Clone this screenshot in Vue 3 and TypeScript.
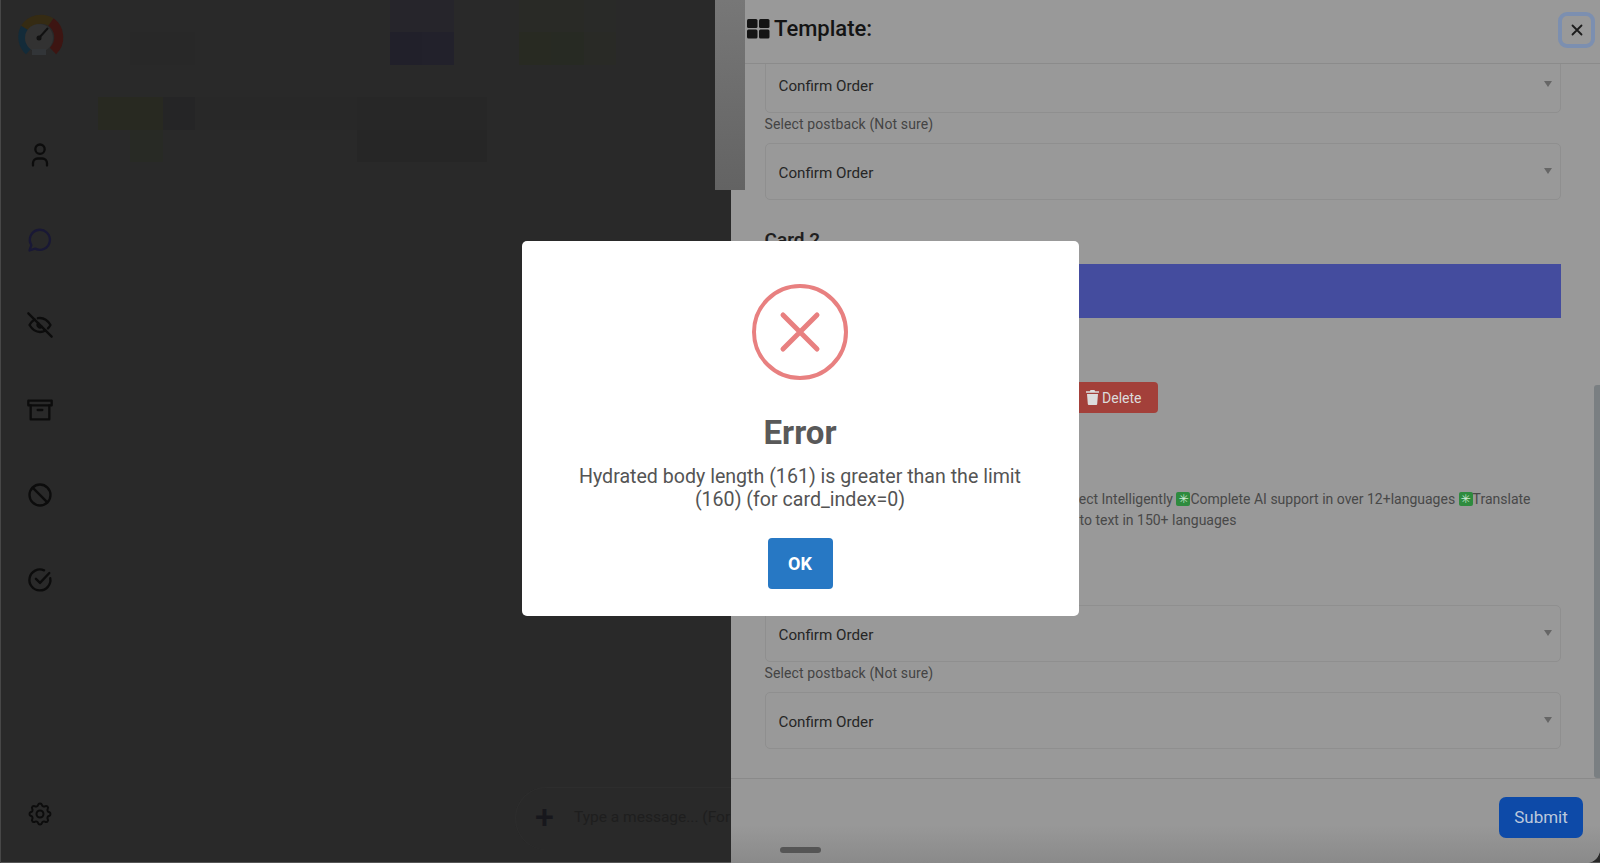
<script setup lang="ts">
import { computed } from 'vue'

interface NavIcon {
  name: string
  paths: string[]
  active?: boolean
}

const navIcons: NavIcon[] = [
  { name: 'user', paths: ['M8 7a4 4 0 1 0 8 0a4 4 0 0 0 -8 0', 'M6 21v-2a4 4 0 0 1 4 -4h4a4 4 0 0 1 4 4v2'] },
  { name: 'chat', active: true, paths: ['M3 21l1.6 -4.6a8.6 8.6 0 1 1 3.2 3l-4.8 1.6'] },
  {
    name: 'hidden',
    paths: [
      'M10.585 10.587a2 2 0 0 0 2.829 2.828',
      'M16.681 16.673a8.717 8.717 0 0 1 -4.681 1.327c-3.6 0 -6.6 -2 -9 -6c1.272 -2.12 2.712 -3.678 4.32 -4.674m2.86 -1.146a9.055 9.055 0 0 1 1.82 -.18c3.6 0 6.6 2 9 6c-.666 1.11 -1.379 2.067 -2.138 2.87',
      'M2 2l20 20',
    ],
  },
  { name: 'archive', paths: ['M2 4h20v4H2z', 'M4 8v12h16V8', 'M10 12h4'] },
  { name: 'blocked', paths: ['M3 12a9 9 0 1 0 18 0a9 9 0 0 0 -18 0', 'M5.7 5.7l12.6 12.6'] },
  { name: 'done', paths: ['M20.8 10.5A9 9 0 1 1 15.5 3.7', 'M20 6l-8 8.5-3.5-3.5'] },
]

const gearPaths = [
  'M10.325 4.317c.426 -1.756 2.924 -1.756 3.35 0a1.724 1.724 0 0 0 2.573 1.066c1.543 -.94 3.31 .826 2.37 2.37a1.724 1.724 0 0 0 1.065 2.572c1.756 .426 1.756 2.924 0 3.35a1.724 1.724 0 0 0 -1.066 2.573c.94 1.543 -.826 3.31 -2.37 2.37a1.724 1.724 0 0 0 -2.572 1.065c-.426 1.756 -2.924 1.756 -3.35 0a1.724 1.724 0 0 0 -2.573 -1.066c-1.543 .94 -3.31 -.826 -2.37 -2.37a1.724 1.724 0 0 0 -1.065 -2.572c-1.756 -.426 -1.756 -2.924 0 -3.35a1.724 1.724 0 0 0 1.066 -2.573c-.94 -1.543 .826 -3.31 2.37 -2.37c1 .608 2.296 .07 2.572 -1.065z',
  'M9 12a3 3 0 1 0 6 0a3 3 0 0 0 -6 0',
]

// blurred message thumbnails behind the dialog: row,col -> colour
const tinted: Record<string, string> = {
  '0,9': '#26252b',
  '0,10': '#26252b',
  '0,13': '#292a26',
  '0,14': '#292a26',
  '0,15': '#292a28',
  '1,1': '#282828',
  '1,2': '#282828',
  '1,9': '#21202a',
  '1,10': '#22212b',
  '1,13': '#282a22',
  '1,14': '#272a23',
  '1,15': '#292a26',
  '3,0': '#282921',
  '3,1': '#282921',
  '3,2': '#252526',
  '3,3': '#282828',
  '3,4': '#282828',
  '3,5': '#282828',
  '3,6': '#282828',
  '3,7': '#282828',
  '3,8': '#272727',
  '3,9': '#272727',
  '3,10': '#272727',
  '3,11': '#272727',
  '4,1': '#282a25',
  '4,8': '#262626',
  '4,9': '#262626',
  '4,10': '#262626',
  '4,11': '#262626',
}

const blurCells = computed(() => {
  const cells: { key: string; color: string }[] = []
  for (let r = 0; r < 6; r++) {
    for (let c = 0; c < 18; c++) {
      const key = r + ',' + c
      cells.push({ key, color: tinted[key] || 'transparent' })
    }
  }
  return cells
})
</script>

<template>
  <div class="app">
    <aside class="sidebar">
      <div class="logo">
        <svg width="50" height="54" viewBox="0 0 50 54" fill="none">
          <path d="M13 41A19 19 0 0 1 9 18" stroke="#132b39" stroke-width="9" />
          <path d="M9 18A19 19 0 0 1 35 12" stroke="#352b13" stroke-width="9" />
          <path d="M35 12A19 19 0 0 1 37 41" stroke="#3d1512" stroke-width="9" />
          <circle cx="23" cy="28" r="14" fill="#323232" />
          <path d="M23 28L32 18" stroke="#111" stroke-width="2" />
          <circle cx="23" cy="28" r="2.5" fill="#111" />
          <path d="M16 42h14" stroke="#323538" stroke-width="6" />
        </svg>
      </div>
      <nav class="nav">
        <div v-for="icon in navIcons" :key="icon.name" class="nav-item" :class="{ active: icon.active }">
          <svg width="28" height="28" viewBox="0 0 24 24" fill="none" stroke="currentColor" stroke-width="2" stroke-linecap="round" stroke-linejoin="round">
            <path v-for="d in icon.paths" :key="d" :d="d" />
          </svg>
        </div>
      </nav>
      <div class="nav-item gear">
        <svg width="28" height="28" viewBox="0 0 24 24" fill="none" stroke="currentColor" stroke-width="1.7" stroke-linecap="round" stroke-linejoin="round">
          <path v-for="d in gearPaths" :key="d" :d="d" />
        </svg>
      </div>
    </aside>

    <main class="chat">
      <div class="blur-grid">
        <div v-for="cell in blurCells" :key="cell.key" :style="{ background: cell.color }" />
      </div>
      <div class="composer">
        <span class="plus">+</span>
        <span class="placeholder">Type a message... (For new line press Shift + Enter)</span>
      </div>
    </main>

    <section class="panel">
      <header class="panel-head">
        <div class="panel-title">
          <svg width="23" height="20" viewBox="0 0 23 20" fill="#141414">
            <rect x="0" y="0" width="10.5" height="9" rx="1.5" />
            <rect x="12" y="0" width="10.5" height="9" rx="1.5" />
            <rect x="0" y="10.5" width="10.5" height="9" rx="1.5" />
            <rect x="12" y="10.5" width="10.5" height="9" rx="1.5" />
          </svg>
          <span>Template:</span>
        </div>
        <button class="close">
          <svg width="12" height="12" viewBox="0 0 12 12" stroke="#1c1c1c" stroke-width="1.8" stroke-linecap="round">
            <path d="M1.5 1.5l9 9M10.5 1.500l-9 9" />
          </svg>
        </button>
      </header>

      <div class="panel-body">
        <div class="select first"><span>Confirm Order</span><i class="caret" /></div>
        <label class="field-label">Select postback (Not sure)</label>
        <div class="select"><span>Confirm Order</span><i class="caret" /></div>

        <h3 class="card-title">Card 2</h3>
        <div class="media-bar" />

        <div class="card-actions">
          <button class="delete">
            <svg width="13" height="15" viewBox="0 0 13 15" fill="#dcdcdc">
              <path d="M4.5 0h4l.6 1.2H13v1.6H0V1.2h3.9zM1 4h11l-.8 10a1 1 0 0 1-1 1H2.800a1 1 0 0 1-1-1z" />
            </svg>
            Delete
          </button>
        </div>

        <div class="card-text">
          <div class="line-end">
            Connect Intelligently <span class="spark">✳</span>Complete AI support in over 12+languages <span class="spark">✳</span>Translate
          </div>
          <div class="line-start">to text in 150+ languages</div>
        </div>

        <div class="select lower"><span>Confirm Order</span><i class="caret" /></div>
        <label class="field-label">Select postback (Not sure)</label>
        <div class="select"><span>Confirm Order</span><i class="caret" /></div>
      </div>

      <footer class="panel-foot">
        <button class="submit">Submit</button>
      </footer>
      <div class="panel-scroll" />
    </section>

    <div class="scroll-thumb" />
    <div class="home-handle" />

    <div class="overlay">
      <div class="modal" role="dialog">
        <div class="error-icon">
          <svg width="96" height="96" viewBox="0 0 96 96" fill="none" stroke="#e88080" stroke-linecap="round">
            <circle cx="48" cy="48" r="46" stroke-width="4" />
            <path d="M31 31l34 34M65 31L31 65" stroke-width="5" />
          </svg>
        </div>
        <h2 class="modal-title">Error</h2>
        <p class="modal-text">Hydrated body length (161) is greater than the limit (160) (for card_index=0)</p>
        <button class="ok">OK</button>
      </div>
    </div>
  </div>
</template>

<style scoped>
.app {
  position: relative;
  display: flex;
  width: 1600px;
  height: 863px;
  overflow: hidden;
  background: #292929;
  font-family: Roboto, "Liberation Sans", sans-serif;
  box-shadow: inset 1px 0 0 #474747, inset 0 -1px 0 #565656;
}

.sidebar {
  width: 80px;
  flex-shrink: 0;
  display: flex;
  flex-direction: column;
  align-items: center;
}

.logo {
  height: 112px;
  padding-top: 10px;
  box-sizing: border-box;
  align-self: flex-start;
  padding-left: 16px;
}

.nav {
  display: flex;
  flex-direction: column;
}

.nav-item {
  height: 85px;
  display: flex;
  align-items: center;
  justify-content: center;
  color: #0c0c0c;
}

.nav-item.active {
  color: #191835;
}

.gear {
  margin-top: auto;
  margin-bottom: 7px;
}

.chat {
  flex: 1;
  min-width: 0;
  display: flex;
  flex-direction: column;
  justify-content: space-between;
  padding-left: 18px;
}

.blur-grid {
  display: grid;
  grid-template-columns: repeat(18, 32.4px);
  grid-auto-rows: 32.4px;
}

.composer {
  align-self: flex-end;
  width: 216px;
  height: 63px;
  margin-bottom: 13px;
  box-sizing: border-box;
  display: flex;
  align-items: center;
  overflow: hidden;
  border-radius: 32px 0 0 32px;
  box-shadow: inset 1px 0 0 #2d2d2d, inset 0 1px 0 #2d2d2d;
  color: #181818;
  white-space: nowrap;
}

.plus {
  width: 59px;
  flex-shrink: 0;
  padding: 0 0 6px 20px;
  box-sizing: border-box;
  font-size: 34px;
  font-weight: 500;
  line-height: 1;
  color: #17171c;
}

.placeholder {
  padding-bottom: 3px;
  font-size: 15.5px;
  color: #1e1e1e;
}

.panel {
  position: relative;
  width: 869px;
  flex-shrink: 0;
  display: flex;
  flex-direction: column;
  background: #999999;
  border-bottom-right-radius: 14px;
  overflow: hidden;
}

.panel-head {
  height: 64px;
  flex-shrink: 0;
  box-sizing: border-box;
  display: flex;
  align-items: center;
  justify-content: space-between;
  padding: 0 5px 6px 16px;
  border-bottom: 1px solid #8b8b8b;
}

.panel-title {
  display: flex;
  align-items: center;
  gap: 4px;
  font-size: 22px;
  font-weight: 500;
  color: #141414;
}

.close {
  width: 37px;
  height: 36px;
  margin-top: 3px;
  padding: 0;
  display: flex;
  align-items: center;
  justify-content: center;
  background: #999999;
  border: 4px solid #7c8fb0;
  border-radius: 9px;
}

.panel-body {
  flex: 1;
  min-height: 0;
  overflow: hidden;
  padding: 0 39px 0 33.5px;
}

.select {
  position: relative;
  height: 57px;
  box-sizing: border-box;
  display: flex;
  align-items: center;
  padding: 2px 14px 0 13px;
  border: 1px solid #8f8f8f;
  border-radius: 5px;
  font-size: 15.2px;
  color: #262626;
}

.select.first {
  margin-top: -8px;
}

.select.lower {
  margin-top: 74px;
}

.caret {
  position: absolute;
  right: 8px;
  top: 24px;
  border-left: 4px solid transparent;
  border-right: 4px solid transparent;
  border-top: 6px solid #666666;
}

.field-label {
  display: block;
  height: 30px;
  padding-top: 2px;
  box-sizing: border-box;
  font-size: 14px;
  line-height: 18px;
  letter-spacing: 0.12px;
  color: #444444;
}

.card-title {
  margin: 29px 0 0;
  height: 35px;
  font-size: 19px;
  font-weight: 600;
  line-height: 22px;
  color: #1f1f1f;
}

.media-bar {
  height: 54px;
  background: #444c9e;
}

.card-actions {
  margin-top: 64px;
  padding-left: 304px;
}

.delete {
  width: 89px;
  height: 31px;
  display: flex;
  align-items: center;
  justify-content: flex-end;
  gap: 3px;
  padding: 0 16px 0 0;
  background: #a3403a;
  border: 0;
  border-radius: 4px;
  font-family: inherit;
  font-size: 14px;
  color: #dcdcdc;
}

.card-text {
  margin-top: 76px;
  font-size: 14px;
  line-height: 21px;
  color: #484848;
  white-space: nowrap;
}

.line-end {
  display: flex;
  justify-content: flex-end;
  gap: 0;
  padding-right: 27px;
  white-space: pre;
}

.line-start {
  padding-left: 315px;
}

.spark {
  display: inline-block;
  width: 14px;
  height: 14px;
  margin-top: 3px;
  background: #2e8b3e;
  border-radius: 2px;
  font-size: 12px;
  line-height: 14px;
  text-align: center;
  color: #cfe9d2;
  font-family: "DejaVu Sans", sans-serif;
}

.panel-foot {
  height: 85px;
  flex-shrink: 0;
  box-sizing: border-box;
  display: flex;
  justify-content: flex-end;
  padding: 18px 17px 0 0;
  border-top: 1px solid #8a8a8a;
  background: linear-gradient(#989898 55%, #8a8a8a);
}

.submit {
  width: 84px;
  height: 41px;
  padding: 0 0 2px;
  background: #0d4aa8;
  border: 0;
  border-radius: 7px;
  font-family: inherit;
  font-size: 17px;
  color: #bcc8dc;
}

.panel-scroll {
  position: absolute;
  right: 0;
  top: 385px;
  width: 6px;
  height: 393px;
  background: #7a7f82;
  border-radius: 3px 0 0 3px;
}

.scroll-thumb {
  position: absolute;
  left: 715px;
  top: 0;
  width: 30px;
  height: 190px;
  background: linear-gradient(#777777, #636363);
}

.home-handle {
  position: absolute;
  left: 780px;
  top: 847px;
  width: 41px;
  height: 6px;
  border-radius: 3px;
  background: #555555;
}

.overlay {
  position: absolute;
  inset: 0;
  display: flex;
  align-items: center;
  justify-content: center;
  padding-bottom: 6px;
  box-sizing: border-box;
}

.modal {
  width: 557px;
  height: 375px;
  box-sizing: border-box;
  padding-top: 43px;
  display: flex;
  flex-direction: column;
  align-items: center;
  background: #ffffff;
  border-radius: 5px;
}

.error-icon {
  height: 96px;
}

.modal-title {
  margin: 35px 0 0;
  font-size: 33px;
  font-weight: 700;
  line-height: 36px;
  color: #595959;
}

.modal-text {
  width: 480px;
  margin: 14px 0 0;
  font-size: 19.6px;
  line-height: 23px;
  text-align: center;
  color: #545454;
}

.ok {
  width: 65px;
  height: 51px;
  margin-top: 27px;
  background: #2778c4;
  border: 0;
  border-radius: 4px;
  font-family: inherit;
  font-size: 18px;
  font-weight: 700;
  color: #ffffff;
}
</style>
